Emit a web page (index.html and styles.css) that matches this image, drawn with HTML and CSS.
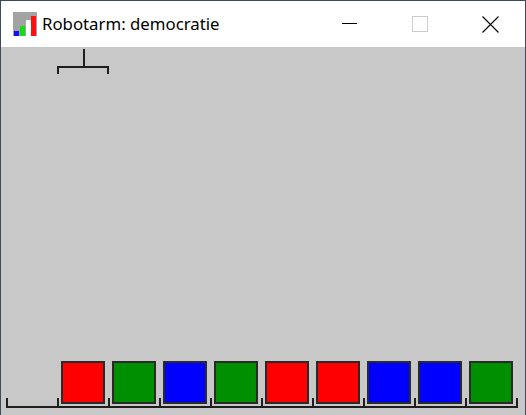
FILE: index.html
```html
<!DOCTYPE html>
<html>
<head>
<meta charset="utf-8">
<link rel="stylesheet" href="styles.css">
</head>
<body>
<div class="window">
  <div class="titlebar">
    <svg class="app-icon" width="24" height="24" viewBox="0 0 24 24">
      <rect x="0" y="0" width="24" height="24" fill="#a3a3a3"/>
      <rect x="1" y="19" width="5" height="5" fill="#1010ff"/>
      <rect x="7" y="14" width="5" height="10" fill="#10e010"/>
      <rect x="13" y="8" width="5" height="16" fill="#ffffff"/>
      <rect x="18" y="4" width="5" height="20" fill="#ff1010"/>
    </svg>
    <span class="title">Robotarm: democratie</span>
    <div class="controls">
      <div class="ctl">
        <svg width="16" height="16" viewBox="0 0 16 16"><rect x="0" y="7" width="15" height="1" fill="#000"/></svg>
      </div>
      <div class="ctl">
        <svg width="16" height="16" viewBox="0 0 16 16"><rect x="0.5" y="0.5" width="15" height="15" fill="none" stroke="#cccccc"/></svg>
      </div>
      <div class="ctl">
        <svg width="17" height="17" viewBox="0 0 17 17"><path d="M0.5 0.5 L16.5 16.5 M16.5 0.5 L0.5 16.5" stroke="#000" stroke-width="1.1"/></svg>
      </div>
    </div>
  </div>
  <div class="content">
    <svg class="scene" width="524" height="368" viewBox="0 0 524 368">
      <g fill="#1e1e1e">
        <rect x="82" y="2" width="2" height="19"/>
        <rect x="56" y="19" width="52" height="2"/>
        <rect x="56" y="19" width="2" height="8"/>
        <rect x="106" y="19" width="2" height="8"/>
      </g>
      <g stroke="#2a2a2a" stroke-width="2">
        <rect x="61" y="315" width="42" height="41" fill="#ff0000"/>
        <rect x="112" y="315" width="42" height="41" fill="#008f00"/>
        <rect x="163" y="315" width="42" height="41" fill="#0000ff"/>
        <rect x="214" y="315" width="42" height="41" fill="#008f00"/>
        <rect x="265" y="315" width="42" height="41" fill="#ff0000"/>
        <rect x="316" y="315" width="42" height="41" fill="#ff0000"/>
        <rect x="367" y="315" width="42" height="41" fill="#0000ff"/>
        <rect x="418" y="315" width="42" height="41" fill="#0000ff"/>
        <rect x="469" y="315" width="42" height="41" fill="#008f00"/>
      </g>
      <g fill="#1e1e1e">
        <rect x="5" y="359" width="512" height="2"/>
        <rect x="5" y="351" width="2" height="10"/>
        <rect x="56" y="351" width="2" height="10"/>
        <rect x="107" y="351" width="2" height="10"/>
        <rect x="158" y="351" width="2" height="10"/>
        <rect x="209" y="351" width="2" height="10"/>
        <rect x="260" y="351" width="2" height="10"/>
        <rect x="311" y="351" width="2" height="10"/>
        <rect x="362" y="351" width="2" height="10"/>
        <rect x="413" y="351" width="2" height="10"/>
        <rect x="464" y="351" width="2" height="10"/>
        <rect x="515" y="351" width="2" height="10"/>
      </g>
    </svg>
  </div>
</div>
</body>
</html>
```

FILE: styles.css
```css
html, body {
  margin: 0;
  padding: 0;
  background: #c8c8c8;
}
.window {
  width: 524px;
  height: 414px;
  border: 1px solid #3b4a5c;
  border-bottom: none;
  display: flex;
  flex-direction: column;
  overflow: hidden;
}
.titlebar {
  height: 46px;
  background: #ffffff;
  display: flex;
  align-items: center;
  flex-shrink: 0;
}
.app-icon {
  margin-left: 12px;
  margin-top: -1px;
  display: block;
}
.title {
  margin-left: 5px;
  font-family: "Noto Sans", "Open Sans", sans-serif;
  font-size: 16.8px;
  color: #000;
  margin-top: -1px;
}
.controls {
  margin-left: auto;
  display: flex;
  height: 100%;
}
.ctl {
  width: 70px;
  height: 100%;
  display: flex;
  align-items: center;
  justify-content: center;
}
.ctl svg {
  display: block;
}
.content {
  flex: 1;
  background: #c8c8c8;
}
.scene {
  display: block;
}
```
